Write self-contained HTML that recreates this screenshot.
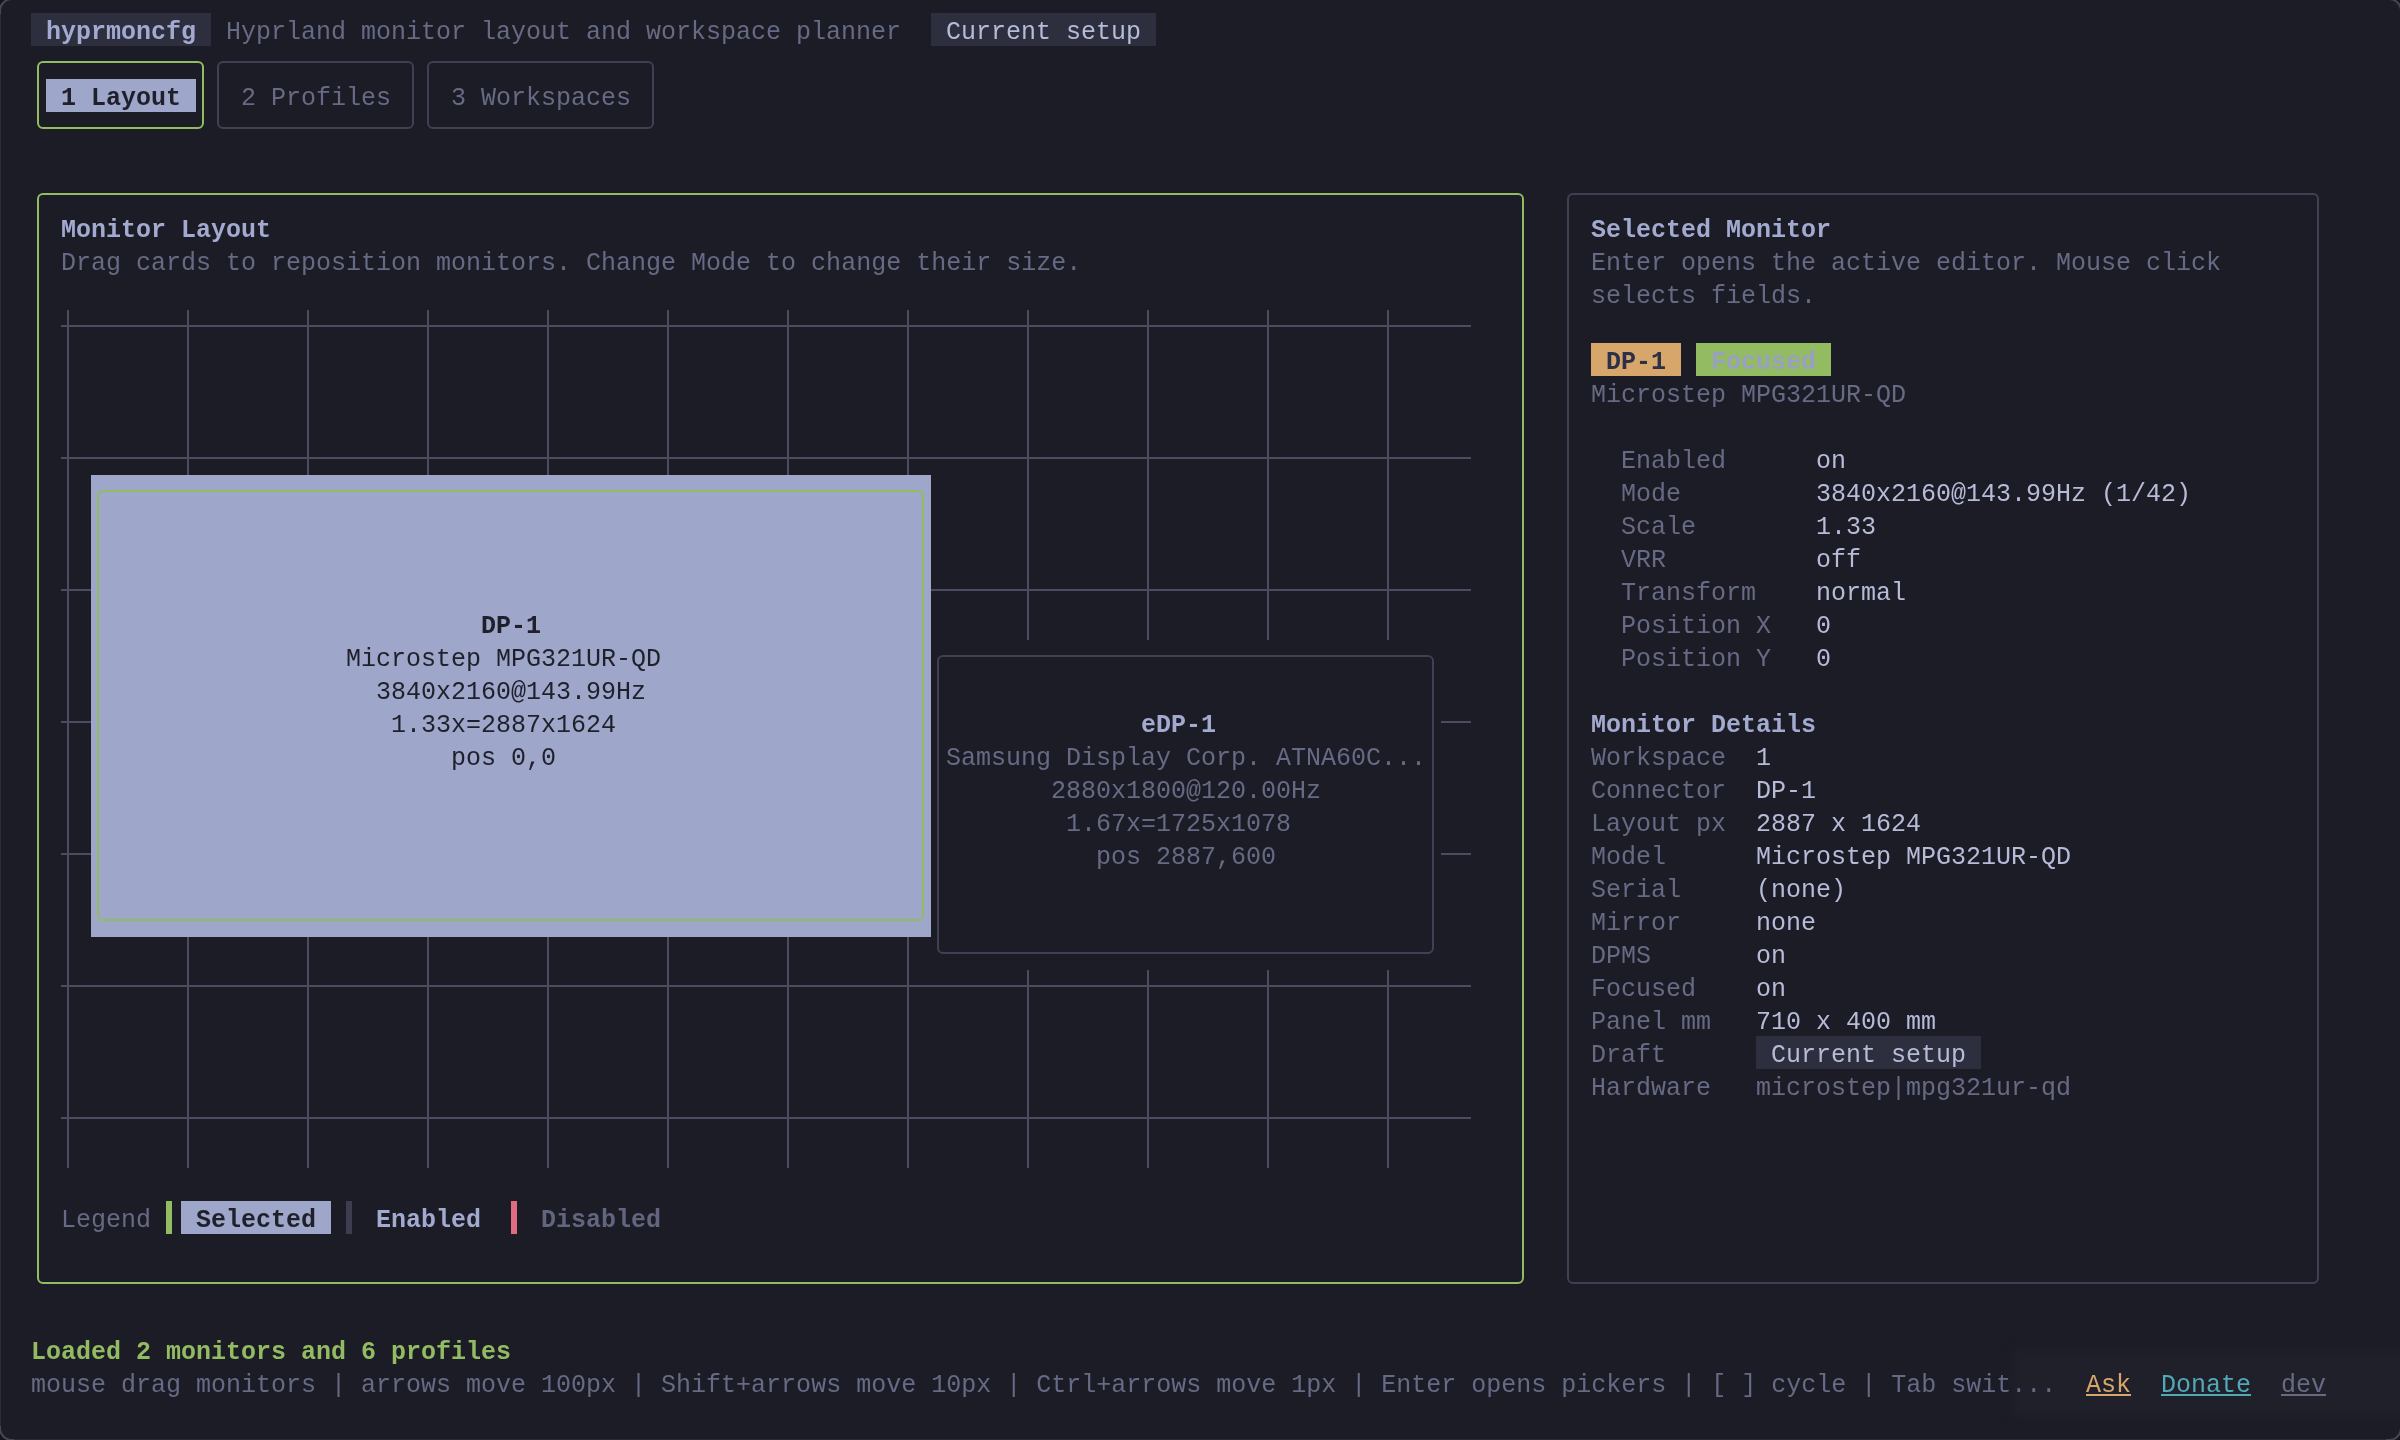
<!DOCTYPE html>
<html><head><meta charset="utf-8"><title>hyprmoncfg</title>
<style>
html,body{margin:0;padding:0;}
body{width:2400px;height:1440px;overflow:hidden;background:#1c1c26;position:relative;font-family:"Liberation Mono",monospace;}
.b{position:absolute;}
.bx{position:absolute;box-sizing:border-box;border:2px solid;}
.t{position:absolute;white-space:pre;font-size:25px;line-height:33px;height:33px;}
.t.b2{font-weight:bold;}
.frame{position:absolute;left:-1px;top:-2px;width:2403px;height:1443px;box-sizing:border-box;border:2px solid #47474d;border-radius:13px;box-shadow:0 0 0 30px #16151d;}
#root{position:absolute;left:0;top:0;width:2400px;height:1440px;will-change:transform;}
.t span{}
</style></head><body><div id="root">
<div class="b" style="left:2013px;top:1350px;width:420px;height:66px;background:#20202a;filter:blur(4px)"></div>
<div class="frame"></div>
<div class="b" style="left:0;top:14px;width:1px;height:1412px;background:#2c2d39"></div>
<div class="b" style="left:14px;top:1439px;width:2372px;height:1px;background:#2a2b37"></div>
<div class="b" style="left:31px;top:13px;width:180px;height:33px;background:#2d2f3e;"></div>
<div class="t b2" style="left:46.0px;top:16px;color:#a2aad0;">hyprmoncfg</div>
<div class="t" style="left:226.0px;top:16px;color:#666a84;">Hyprland monitor layout and workspace planner</div>
<div class="b" style="left:931px;top:13px;width:225px;height:33px;background:#2d2f3e;"></div>
<div class="t" style="left:946.0px;top:16px;color:#b6bbd8;">Current setup</div>
<div class="bx" style="left:37px;top:61px;width:167px;height:68px;border-color:#92bb62;border-radius:6px"></div>
<div class="b" style="left:46px;top:79px;width:150px;height:33px;background:#9ea6c9;"></div>
<div class="t b2" style="left:61.0px;top:82px;color:#1f202b;">1 Layout</div>
<div class="bx" style="left:217px;top:61px;width:197px;height:68px;border-color:#3e4153;border-radius:6px"></div>
<div class="t" style="left:241.0px;top:82px;color:#666a84;">2 Profiles</div>
<div class="bx" style="left:427px;top:61px;width:227px;height:68px;border-color:#3e4153;border-radius:6px"></div>
<div class="t" style="left:451.0px;top:82px;color:#666a84;">3 Workspaces</div>
<div class="bx" style="left:37px;top:193px;width:1487px;height:1091px;border-color:#92bb62;border-radius:6px"></div>
<div class="t b2" style="left:61.0px;top:214px;color:#a2aad0;">Monitor Layout</div>
<div class="t" style="left:61.0px;top:247px;color:#666a84;">Drag cards to reposition monitors. Change Mode to change their size.</div>
<div class="b" style="left:61px;top:325px;width:1410px;height:2px;background:#4a4d61"></div>
<div class="b" style="left:61px;top:457px;width:1410px;height:2px;background:#4a4d61"></div>
<div class="b" style="left:61px;top:589px;width:1410px;height:2px;background:#4a4d61"></div>
<div class="b" style="left:61px;top:721px;width:1410px;height:2px;background:#4a4d61"></div>
<div class="b" style="left:61px;top:853px;width:1410px;height:2px;background:#4a4d61"></div>
<div class="b" style="left:61px;top:985px;width:1410px;height:2px;background:#4a4d61"></div>
<div class="b" style="left:61px;top:1117px;width:1410px;height:2px;background:#4a4d61"></div>
<div class="b" style="left:67px;top:310px;width:2px;height:858px;background:#4a4d61"></div>
<div class="b" style="left:187px;top:310px;width:2px;height:858px;background:#4a4d61"></div>
<div class="b" style="left:307px;top:310px;width:2px;height:858px;background:#4a4d61"></div>
<div class="b" style="left:427px;top:310px;width:2px;height:858px;background:#4a4d61"></div>
<div class="b" style="left:547px;top:310px;width:2px;height:858px;background:#4a4d61"></div>
<div class="b" style="left:667px;top:310px;width:2px;height:858px;background:#4a4d61"></div>
<div class="b" style="left:787px;top:310px;width:2px;height:858px;background:#4a4d61"></div>
<div class="b" style="left:907px;top:310px;width:2px;height:858px;background:#4a4d61"></div>
<div class="b" style="left:1027px;top:310px;width:2px;height:858px;background:#4a4d61"></div>
<div class="b" style="left:1147px;top:310px;width:2px;height:858px;background:#4a4d61"></div>
<div class="b" style="left:1267px;top:310px;width:2px;height:858px;background:#4a4d61"></div>
<div class="b" style="left:1387px;top:310px;width:2px;height:858px;background:#4a4d61"></div>
<div class="b" style="left:931px;top:640px;width:510px;height:330px;background:#1c1c26;"></div>
<div class="bx" style="left:937px;top:655px;width:497px;height:299px;border-color:#3e4153;border-radius:6px"></div>
<div class="t b2" style="left:1141.0px;top:709px;color:#a2aad0;">eDP-1</div>
<div class="t" style="left:946.0px;top:742px;color:#666a84;">Samsung Display Corp. ATNA60C...</div>
<div class="t" style="left:1051.0px;top:775px;color:#666a84;">2880x1800@120.00Hz</div>
<div class="t" style="left:1066.0px;top:808px;color:#666a84;">1.67x=1725x1078</div>
<div class="t" style="left:1096.0px;top:841px;color:#666a84;">pos 2887,600</div>
<div class="b" style="left:91px;top:475px;width:840px;height:462px;background:#9ea6c9;"></div>
<div class="bx" style="left:97px;top:490px;width:827px;height:431px;border-color:#92bb62;border-radius:6px"></div>
<div class="t b2" style="left:481.0px;top:610px;color:#1f202b;">DP-1</div>
<div class="t" style="left:346.0px;top:643px;color:#1f202b;">Microstep MPG321UR-QD</div>
<div class="t" style="left:376.0px;top:676px;color:#1f202b;">3840x2160@143.99Hz</div>
<div class="t" style="left:391.0px;top:709px;color:#1f202b;">1.33x=2887x1624</div>
<div class="t" style="left:451.0px;top:742px;color:#1f202b;">pos 0,0</div>
<div class="t" style="left:61.0px;top:1204px;color:#666a84;">Legend</div>
<div class="b" style="left:166px;top:1201px;width:0px;height:33px;background:#92bb62;width:6px"></div>
<div class="b" style="left:181px;top:1201px;width:150px;height:33px;background:#9ea6c9;"></div>
<div class="t b2" style="left:196.0px;top:1204px;color:#1f202b;">Selected</div>
<div class="b" style="left:346px;top:1201px;width:0px;height:33px;background:#3c3e50;width:6px"></div>
<div class="t b2" style="left:376.0px;top:1204px;color:#a2aad0;">Enabled</div>
<div class="b" style="left:511px;top:1201px;width:0px;height:33px;background:#e06c82;width:6px"></div>
<div class="t b2" style="left:541.0px;top:1204px;color:#61657e;">Disabled</div>
<div class="bx" style="left:1567px;top:193px;width:752px;height:1091px;border-color:#3e4153;border-radius:6px"></div>
<div class="t b2" style="left:1591.0px;top:214px;color:#a2aad0;">Selected Monitor</div>
<div class="t" style="left:1591.0px;top:247px;color:#666a84;">Enter opens the active editor. Mouse click</div>
<div class="t" style="left:1591.0px;top:280px;color:#666a84;">selects fields.</div>
<div class="b" style="left:1591px;top:343px;width:90px;height:33px;background:#d6a66a;"></div>
<div class="t b2" style="left:1606.0px;top:346px;color:#2c3049;">DP-1</div>
<div class="b" style="left:1696px;top:343px;width:135px;height:33px;background:#92bb62;"></div>
<div class="t b2" style="left:1711.0px;top:346px;color:#9aa0c4;">Focused</div>
<div class="t" style="left:1591.0px;top:379px;color:#666a84;">Microstep MPG321UR-QD</div>
<div class="t" style="left:1621.0px;top:445px;color:#666a84;">Enabled</div>
<div class="t" style="left:1816.0px;top:445px;color:#b6bbd8;">on</div>
<div class="t" style="left:1621.0px;top:478px;color:#666a84;">Mode</div>
<div class="t" style="left:1816.0px;top:478px;color:#b6bbd8;">3840x2160@143.99Hz (1/42)</div>
<div class="t" style="left:1621.0px;top:511px;color:#666a84;">Scale</div>
<div class="t" style="left:1816.0px;top:511px;color:#b6bbd8;">1.33</div>
<div class="t" style="left:1621.0px;top:544px;color:#666a84;">VRR</div>
<div class="t" style="left:1816.0px;top:544px;color:#b6bbd8;">off</div>
<div class="t" style="left:1621.0px;top:577px;color:#666a84;">Transform</div>
<div class="t" style="left:1816.0px;top:577px;color:#b6bbd8;">normal</div>
<div class="t" style="left:1621.0px;top:610px;color:#666a84;">Position X</div>
<div class="t" style="left:1816.0px;top:610px;color:#b6bbd8;">0</div>
<div class="t" style="left:1621.0px;top:643px;color:#666a84;">Position Y</div>
<div class="t" style="left:1816.0px;top:643px;color:#b6bbd8;">0</div>
<div class="t b2" style="left:1591.0px;top:709px;color:#a2aad0;">Monitor Details</div>
<div class="t" style="left:1591.0px;top:742px;color:#666a84;">Workspace</div>
<div class="t" style="left:1756.0px;top:742px;color:#b6bbd8;">1</div>
<div class="t" style="left:1591.0px;top:775px;color:#666a84;">Connector</div>
<div class="t" style="left:1756.0px;top:775px;color:#b6bbd8;">DP-1</div>
<div class="t" style="left:1591.0px;top:808px;color:#666a84;">Layout px</div>
<div class="t" style="left:1756.0px;top:808px;color:#b6bbd8;">2887 x 1624</div>
<div class="t" style="left:1591.0px;top:841px;color:#666a84;">Model</div>
<div class="t" style="left:1756.0px;top:841px;color:#b6bbd8;">Microstep MPG321UR-QD</div>
<div class="t" style="left:1591.0px;top:874px;color:#666a84;">Serial</div>
<div class="t" style="left:1756.0px;top:874px;color:#b6bbd8;">(none)</div>
<div class="t" style="left:1591.0px;top:907px;color:#666a84;">Mirror</div>
<div class="t" style="left:1756.0px;top:907px;color:#b6bbd8;">none</div>
<div class="t" style="left:1591.0px;top:940px;color:#666a84;">DPMS</div>
<div class="t" style="left:1756.0px;top:940px;color:#b6bbd8;">on</div>
<div class="t" style="left:1591.0px;top:973px;color:#666a84;">Focused</div>
<div class="t" style="left:1756.0px;top:973px;color:#b6bbd8;">on</div>
<div class="t" style="left:1591.0px;top:1006px;color:#666a84;">Panel mm</div>
<div class="t" style="left:1756.0px;top:1006px;color:#b6bbd8;">710 x 400 mm</div>
<div class="t" style="left:1591.0px;top:1039px;color:#666a84;">Draft</div>
<div class="b" style="left:1756px;top:1036px;width:225px;height:33px;background:#2d2f3e;"></div>
<div class="t" style="left:1771.0px;top:1039px;color:#b6bbd8;">Current setup</div>
<div class="t" style="left:1591.0px;top:1072px;color:#666a84;">Hardware</div>
<div class="t" style="left:1756.0px;top:1072px;color:#666a84;">microstep|mpg321ur-qd</div>
<div class="t b2" style="left:31.0px;top:1336px;color:#92bb62;">Loaded 2 monitors and 6 profiles</div>
<div class="t" style="left:31.0px;top:1369px;color:#666a84;">mouse drag monitors | arrows move 100px | Shift+arrows move 10px | Ctrl+arrows move 1px | Enter opens pickers | [ ] cycle | Tab swit...</div>
<div class="t" style="left:2086.0px;top:1369px;color:#d6a66a;text-decoration:underline">Ask</div>
<div class="t" style="left:2161.0px;top:1369px;color:#52a9b6;text-decoration:underline">Donate</div>
<div class="t" style="left:2281.0px;top:1369px;color:#666a84;text-decoration:underline">dev</div>
</div></body></html>
